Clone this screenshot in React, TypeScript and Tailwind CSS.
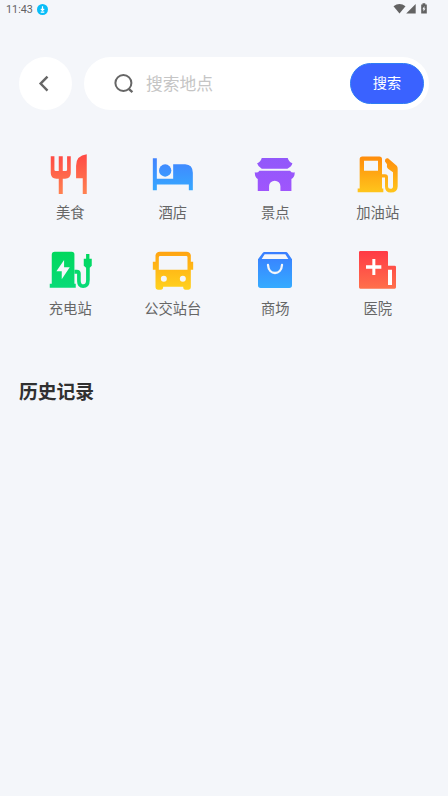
import React from 'react';

interface Category {
  label: string;
  viewBox: string;
  colors: [string, string];
  icon: (fill: string) => React.ReactNode;
}

const categories: Category[] = [
  {
    label: '美食',
    viewBox: '18.75 15 144 144',
    colors: ['#ff4a45', '#ff8050'],
    icon: (fill) => (
      <g fill={fill}>
        <path d="M33 34H44V74Q44 78 48 78H57V34H69V78H78Q82 78 82 74V34H93V84Q93 101 76 101H69V147H57V101H50Q33 101 33 84Z" />
        <path d="M141 28V147H129V100H109V62Q109 32 141 28Z" />
      </g>
    ),
  },
  {
    label: '酒店',
    viewBox: '19.5 14.5 144 144',
    colors: ['#4380ff', '#35abff'],
    icon: (fill) => (
      <g fill={fill}>
        <path d="M31 39H43V101H92V57H128Q151 58 151 83V135H139V118H43V135H31Z" />
        <circle cx="68" cy="76" r="18.5" />
      </g>
    ),
  },
  {
    label: '景点',
    viewBox: '18.75 15 144 144',
    colors: ['#9058fa', '#a055fd'],
    icon: (fill) => (
      <g fill={fill}>
        <path d="M51 39H129Q132 51 143 55Q140 66 128 71H51Q40 66 37 55Q48 51 51 39Z" />
        <path d="M30 82Q39 85 44 77H136Q141 85 150 82Q150 98 140 102V138H107V124A17 17 0 0 0 73 124V138H39V102Q30 98 30 82Z" />
      </g>
    ),
  },
  {
    label: '加油站',
    viewBox: '18 14.5 144 144',
    colors: ['#ff8a0b', '#ffc61c'],
    icon: (fill) => (
      <g fill={fill}>
        <path
          fillRule="evenodd"
          d="M43 34H94Q102 34 102 42V130H106V141H29V130H35V42Q35 34 43 34ZM48 47V77H90V47Z"
        />
        <path d="M102 87H111Q120 87 120 96V124Q120 131 127 131Q135 131 135 124V81L120 71Q115 67 117 57L111 49Q110 38 120 39L146 62Q149 65 149 71V124Q149 142 128 142Q111 142 111 124V97H102Z" />
      </g>
    ),
  },
  {
    label: '充电站',
    viewBox: '18.75 12 144 144',
    colors: ['#00d85d', '#08db79'],
    icon: (fill) => (
      <>
        <g fill={fill}>
          <path d="M45 29H96Q104 29 104 37V125H108V137H30V125H36V38Q36 29 45 29Z" />
          <path d="M139 36H149V50H156V71L150 77V114Q150 138 130 138Q112 138 112 118V95H104V83H111Q123 83 123 95V116Q123 127 131 127Q139 127 139 114V77L132 71V50H139Z" />
        </g>
        <path d="M73 54L50 88H66V112L90 76H73Z" fill="#f4f6fa" />
      </>
    ),
  },
  {
    label: '公交站台',
    viewBox: '19.5 12 144 144',
    colors: ['#ffa411', '#ffd21e'],
    icon: (fill) => (
      <path
        fill={fill}
        fillRule="evenodd"
        d="M52 29H132Q143 29 145 40V59H152V83H145V136Q145 143 138 143H129Q122 143 122 134H62Q62 143 55 143H46Q39 143 39 136V83H31V59H39V40Q41 29 52 29ZM53 42Q49 42 49 46V83H135V46Q135 42 131 42ZM64 101A9 9 0 1 0 64 119A9 9 0 1 0 64 101ZM121 101A9 9 0 1 0 121 119A9 9 0 1 0 121 101Z"
      />
    ),
  },
  {
    label: '商场',
    viewBox: '18 12 144 144',
    colors: ['#397dff', '#35adff'],
    icon: (fill) => (
      <>
        <path
          fill={fill}
          fillRule="evenodd"
          d="M58 30H123Q126 30 128 33L141 52V130Q141 138 133 138H47Q39 138 39 130V52L53 33Q55 30 58 30ZM59 37L50 51H130L121 37Z"
        />
        <path d="M69 69C71 101 109 101 111 69" fill="none" stroke="#f4f6fa" strokeWidth="7" strokeLinecap="round" />
      </>
    ),
  },
  {
    label: '医院',
    viewBox: '327 12 144 144',
    colors: ['#ff3b46', '#ff714b'],
    icon: (fill) => (
      <>
        <path d="M346 27H425Q429 27 429 31V71H449Q453 71 453 75V136Q453 140 449 140H346Q342 140 342 136V31Q342 27 346 27Z" fill={fill} />
        <path d="M382 51H391V70H409V80H391V99H382V80H363V70H382ZM429 83H441V129H429Z" fill="#fff" />
      </>
    ),
  },
];

const StatusBar: React.FC = () => (
  <div className="flex h-[18px] items-center pl-1.5 pr-5">
    <span className="w-[27px] whitespace-nowrap pt-0.5 font-[Roboto] text-[10.8px] leading-4 text-[#626262]">11:43</span>
    <svg className="ml-1 size-[11px]" viewBox="0 0 11 11">
      <circle cx="5.5" cy="5.5" r="5.5" fill="#08bdf8" />
      <path d="M5.5 2.3V6.4M3.8 4.8L5.5 6.5L7.2 4.8M3.7 8.2H7.3" fill="none" stroke="#fff" strokeWidth="1.2" />
    </svg>
    <svg className="ml-auto h-[18px] w-9" viewBox="0 0 36 18" fill="#626262">
      <path d="M1.5 6.2Q7.5 1.7 13.5 6.2L7.5 13.5Z" />
      <path d="M23.7 4V13.5H14.2Z" />
      <path fillRule="evenodd" d="M29.2 4.4H30.5V3.3H33.3V4.4H34.8V13.6H29.2ZM32.4 6L30.4 9.2H31.5V11.6L33.5 8.4H32.4Z" />
    </svg>
  </div>
);

const SearchHeader: React.FC = () => (
  <div className="mt-[39px] flex gap-3 px-[19px]">
    <button className="flex size-[53px] items-center justify-center rounded-full bg-white">
      <svg className="size-5" viewBox="0 0 20 20" fill="none" stroke="#666" strokeWidth="2.4">
        <path d="M11.5 2.6L4.6 9.6L11.5 16.6" />
      </svg>
    </button>
    <div className="flex h-[53px] flex-1 items-center rounded-full bg-white pl-[30px] pr-[5px]">
      <svg className="size-5" viewBox="0 0 20 20" fill="none" stroke="#666" strokeWidth="2">
        <circle cx="9.4" cy="9" r="8" />
        <path d="M14.4 14.6L18.4 18.2" strokeWidth="2.3" />
      </svg>
      <span className="ml-3 flex-1 pb-px text-[16.8px] leading-6 text-[#c5c5c5]">搜索地点</span>
      <button className="h-[41px] w-[74px] rounded-full border border-[#2e7df5] bg-[#3a62ff] pb-0.5 text-[14.2px] text-white">
        搜索
      </button>
    </div>
  </div>
);

const CategoryGrid: React.FC = () => (
  <div className="mt-10 grid grid-cols-4 gap-y-6 px-[19px]">
    {categories.map((item, index) => (
      <div key={item.label} className="flex h-[72px] flex-col items-center">
        <svg className="size-12 shrink-0" viewBox={item.viewBox}>
          <defs>
            <linearGradient id={`cat-${index}`} gradientUnits="userSpaceOnUse" x1="0" y1="30" x2="0" y2="143">
              <stop stopColor={item.colors[0]} />
              <stop offset="1" stopColor={item.colors[1]} />
            </linearGradient>
          </defs>
          {item.icon(`url(#cat-${index})`)}
        </svg>
        <span className="mt-1 text-[14.3px] leading-5 text-[#666]">{item.label}</span>
      </div>
    ))}
  </div>
);

const App: React.FC = () => {
  return (
    <div className="min-h-screen w-full bg-[#f4f6fa] font-['Noto_Sans_CJK_SC',sans-serif]">
      <StatusBar />
      <SearchHeader />
      <CategoryGrid />
      <h2 className="mt-[59px] px-[19px] text-[18.8px] font-bold leading-7 text-[#303030]">历史记录</h2>
    </div>
  );
};

export default App;
